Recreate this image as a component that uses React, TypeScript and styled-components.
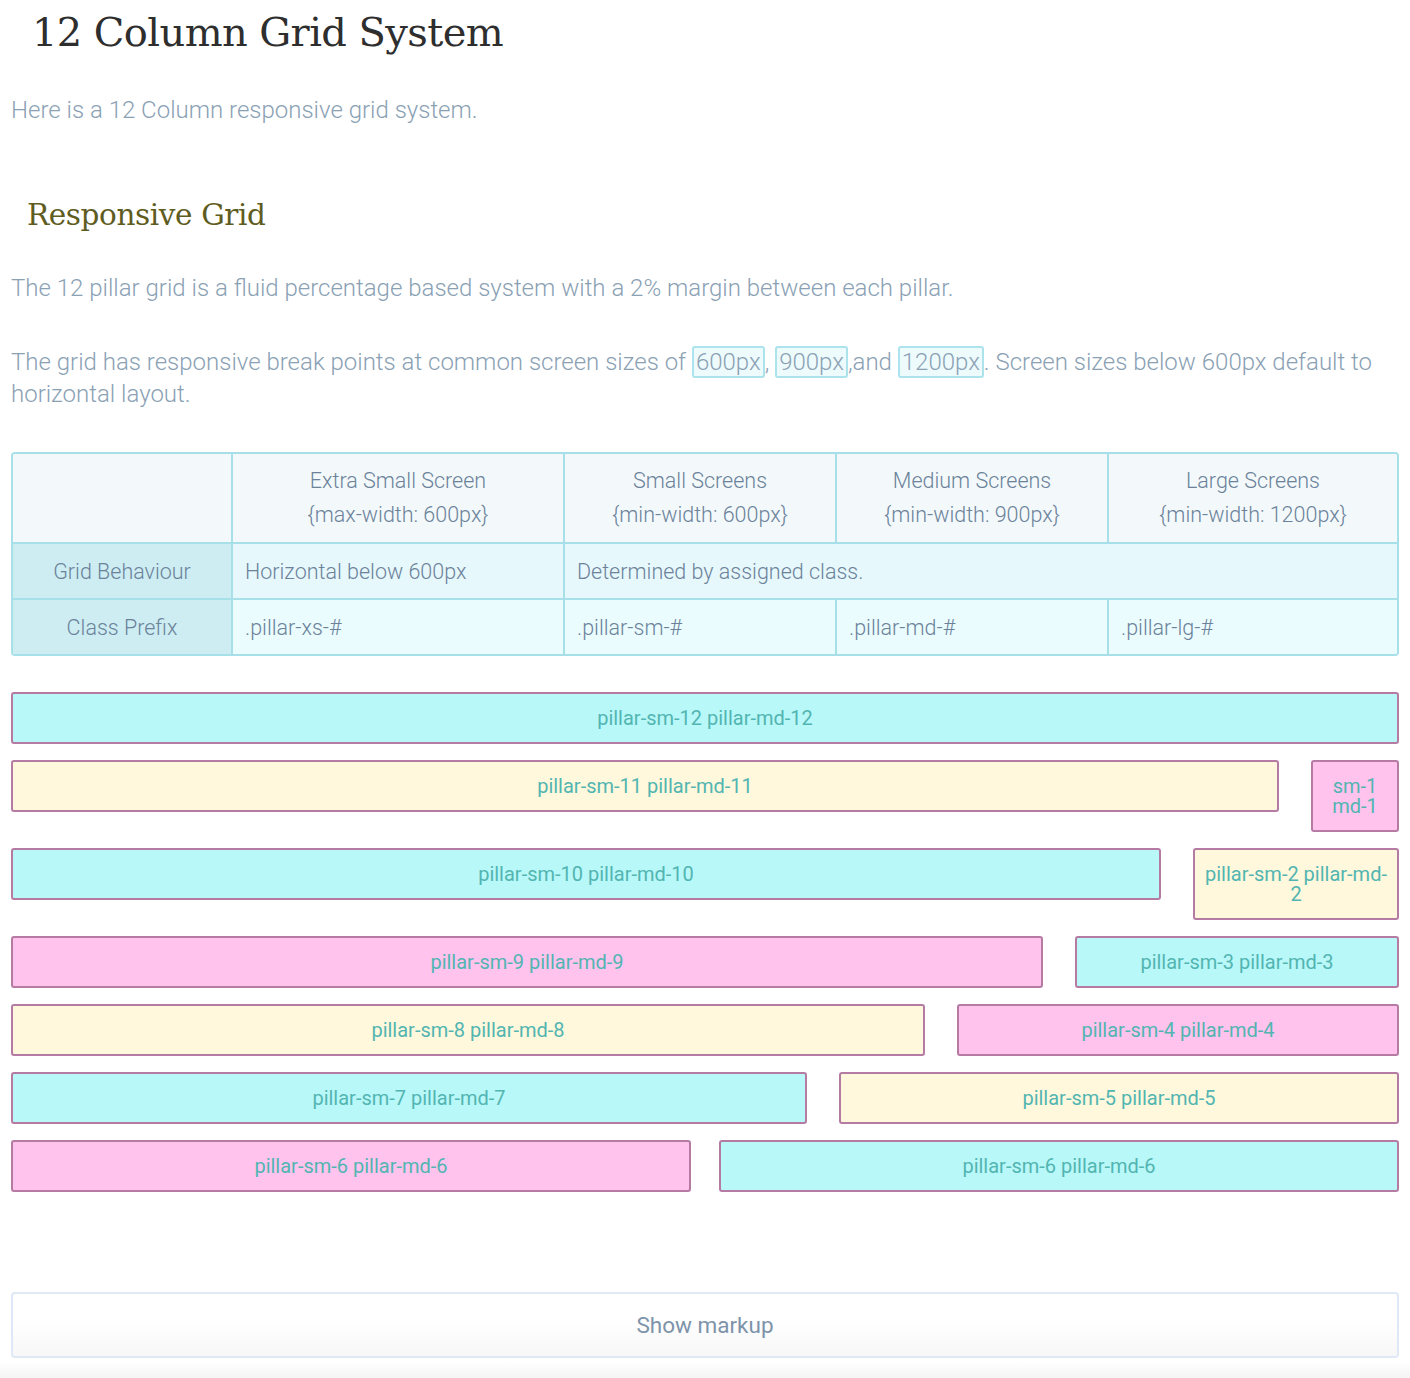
import React from "react";
import styled, { createGlobalStyle } from "styled-components";

const Global = createGlobalStyle`
  html, body { margin: 0; padding: 0; background: #fff; }
  body {
    font-family: Roboto, "Noto Sans", sans-serif;
    font-weight: 300;
    color: #8aa1b4;
  }
`;

const Page = styled.div`
  padding: 0 11px 0 11px;
  min-height: 1378px;
  box-sizing: border-box;
  background: linear-gradient(to bottom, #fff 0, #fff 1360px, #f3f3f3 1378px);
`;

const Title = styled.h1`
  font-family: "DejaVu Serif", "Liberation Serif", serif;
  font-weight: 300;
  font-size: 40px;
  line-height: 60px;
  color: #2e2e2e;
  margin: 2px 0 0 21px;
  letter-spacing: -0.6px;
`;

const Lead = styled.p`
  font-size: 24px;
  line-height: 32px;
  margin: 32px 0 0 0;
`;

const SubTitle = styled.h2`
  font-family: "DejaVu Serif", "Liberation Serif", serif;
  font-weight: 300;
  font-size: 29.5px;
  line-height: 40px;
  color: #5f5c22;
  margin: 69px 0 0 16px;
  letter-spacing: -0.4px;
`;

const Para = styled.p<{ $top: number }>`
  font-size: 24px;
  line-height: 32px;
  margin: ${(p) => p.$top}px 0 0 0;
`;

const Code = styled.code`
  font-family: Roboto, "Noto Sans", sans-serif;
  font-weight: 300;
  font-size: 24px;
  background: #eefbfd;
  border: 2px solid #ace3ec;
  border-radius: 3px;
  padding: 0 2px;
`;

const Table = styled.table`
  margin-top: 42px;
  width: 1388px;
  border-collapse: separate;
  border-spacing: 0;
  border: 2px solid #a7e0e9;
  border-radius: 4px;
  overflow: hidden;
  font-size: 21.5px;
  color: #6b829a;
`;

const HeadCell = styled.th`
  background: #f3f9fb;
  font-weight: 300;
  text-align: center;
  line-height: 34px;
  padding: 10px 8px 10px;
  border-left: 2px solid #a7e0e9;
  &:first-child { border-left: none; }
`;

const RowHead = styled.td`
  background: #cdedf2;
  text-align: center;
  height: 54px;
  padding: 0;
  border-top: 2px solid #a7e0e9;
`;

const Cell = styled.td<{ $tone: "a" | "b" }>`
  background: ${(p) => (p.$tone === "a" ? "#e7f8fc" : "#eafcfe")};
  padding: 0 12px;
  height: 54px;
  border-top: 2px solid #a7e0e9;
  border-left: 2px solid #a7e0e9;
`;

const Grid = styled.div`
  margin-top: 36px;
  display: flex;
  flex-direction: column;
  gap: 16px;
`;

const Row = styled.div`
  display: flex;
  justify-content: space-between;
  align-items: flex-start;
`;

const tones: Record<string, string> = {
  cyan: "#b9f8f9",
  yellow: "#fff8dc",
  pink: "#ffc3ee",
};

const Pillar = styled.div<{ $w: number; $tone: string }>`
  box-sizing: border-box;
  width: ${(p) => p.$w}px;
  background: ${(p) => tones[p.$tone]};
  border: 2px solid #b57ba3;
  border-radius: 3px;
  padding: 14px 6px;
  text-align: center;
  font-size: 20px;
  font-weight: 400;
  line-height: 20px;
  color: #52b5b1;
`;

const Markup = styled.button`
  display: block;
  width: 1388px;
  height: 66px;
  margin-top: 100px;
  border: 2px solid #dfe9f6;
  border-radius: 4px;
  background: linear-gradient(to bottom, #ffffff 40%, #f7f7f7 100%);
  font-family: Roboto, "Noto Sans", sans-serif;
  font-size: 22.5px;
  font-weight: 400;
  color: #7d93a9;
  cursor: pointer;
`;

const w = (n: number) => (n === 12 ? 1388 : n === 6 ? 680 : 118 * n - 30);

type P = { n: number; tone: string; label: string };

const rows: P[][] = [
  [{ n: 12, tone: "cyan", label: "pillar-sm-12 pillar-md-12" }],
  [
    { n: 11, tone: "yellow", label: "pillar-sm-11 pillar-md-11" },
    { n: 1, tone: "pink", label: "sm-1 md-1" },
  ],
  [
    { n: 10, tone: "cyan", label: "pillar-sm-10 pillar-md-10" },
    { n: 2, tone: "yellow", label: "pillar-sm-2 pillar-md-2" },
  ],
  [
    { n: 9, tone: "pink", label: "pillar-sm-9 pillar-md-9" },
    { n: 3, tone: "cyan", label: "pillar-sm-3 pillar-md-3" },
  ],
  [
    { n: 8, tone: "yellow", label: "pillar-sm-8 pillar-md-8" },
    { n: 4, tone: "pink", label: "pillar-sm-4 pillar-md-4" },
  ],
  [
    { n: 7, tone: "cyan", label: "pillar-sm-7 pillar-md-7" },
    { n: 5, tone: "yellow", label: "pillar-sm-5 pillar-md-5" },
  ],
  [
    { n: 6, tone: "pink", label: "pillar-sm-6 pillar-md-6" },
    { n: 6, tone: "cyan", label: "pillar-sm-6 pillar-md-6" },
  ],
];

export default function App() {
  return (
    <>
      <Global />
      <Page>
        <Title>12 Column Grid System</Title>
        <Lead>Here is a 12 Column responsive grid system.</Lead>
        <SubTitle>Responsive Grid</SubTitle>
        <Para $top={37}>
          The 12 pillar grid is a fluid percentage based system with a 2% margin between each pillar.
        </Para>
        <Para $top={42}>
          The grid has responsive break points at common screen sizes of <Code>600px</Code>,{" "}
          <Code>900px</Code>,and <Code>1200px</Code>. Screen sizes below 600px default to horizontal
          layout.
        </Para>
        <Table>
          <colgroup>
            <col style={{ width: 218 }} />
            <col style={{ width: 332 }} />
            <col style={{ width: 272 }} />
            <col style={{ width: 272 }} />
            <col />
          </colgroup>
          <thead>
            <tr>
              <HeadCell />
              <HeadCell>
                Extra Small Screen
                <br />
                {"{max-width: 600px}"}
              </HeadCell>
              <HeadCell>
                Small Screens
                <br />
                {"{min-width: 600px}"}
              </HeadCell>
              <HeadCell>
                Medium Screens
                <br />
                {"{min-width: 900px}"}
              </HeadCell>
              <HeadCell>
                Large Screens
                <br />
                {"{min-width: 1200px}"}
              </HeadCell>
            </tr>
          </thead>
          <tbody>
            <tr>
              <RowHead>Grid Behaviour</RowHead>
              <Cell $tone="a">Horizontal below 600px</Cell>
              <Cell $tone="a" colSpan={3}>
                Determined by assigned class.
              </Cell>
            </tr>
            <tr>
              <RowHead>Class Prefix</RowHead>
              <Cell $tone="b">.pillar-xs-#</Cell>
              <Cell $tone="b">.pillar-sm-#</Cell>
              <Cell $tone="b">.pillar-md-#</Cell>
              <Cell $tone="b">.pillar-lg-#</Cell>
            </tr>
          </tbody>
        </Table>
        <Grid>
          {rows.map((r, i) => (
            <Row key={i}>
              {r.map((p, j) => (
                <Pillar key={j} $w={w(p.n)} $tone={p.tone}>
                  {p.label}
                </Pillar>
              ))}
            </Row>
          ))}
        </Grid>
        <Markup>Show markup</Markup>
      </Page>
    </>
  );
}
